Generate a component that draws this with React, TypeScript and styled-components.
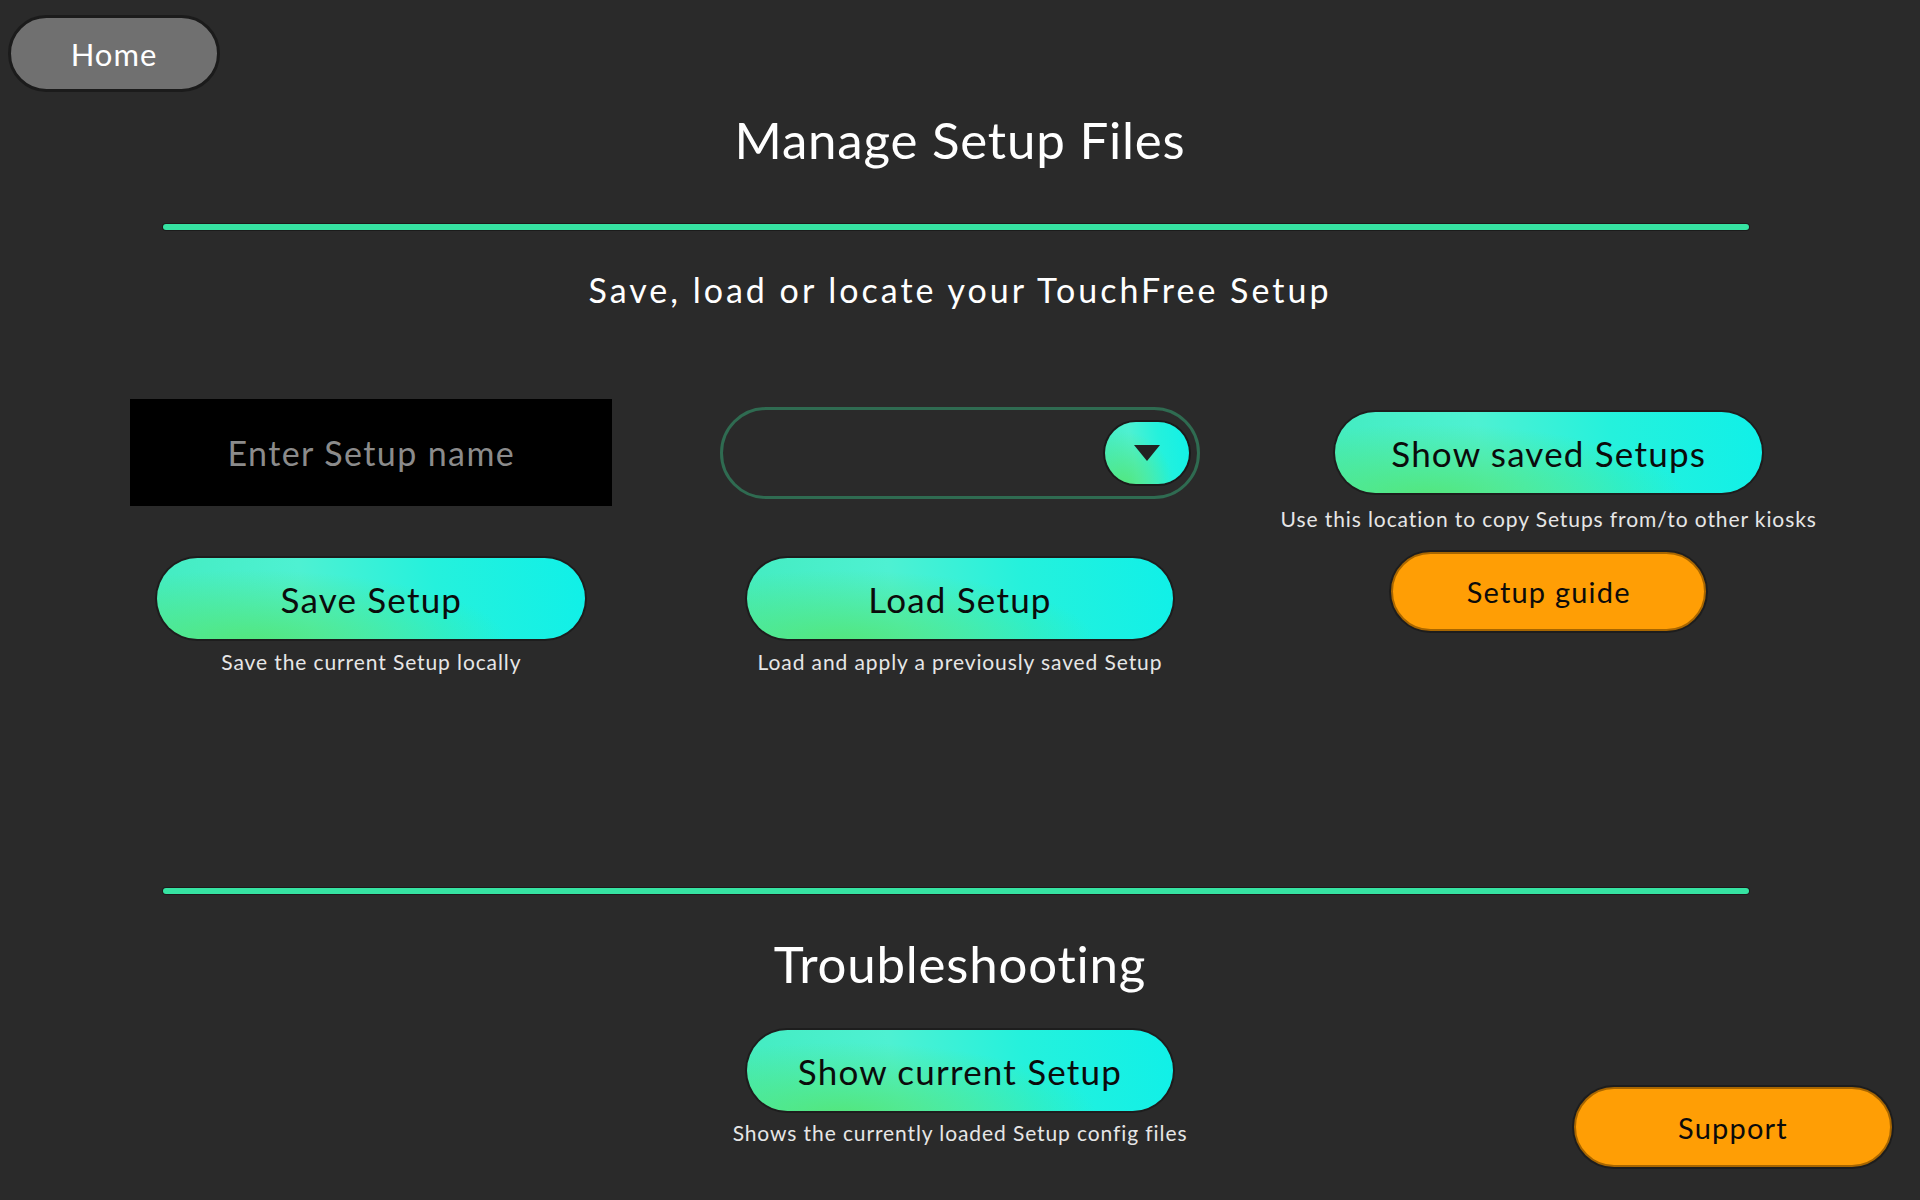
import * as React from 'react';
import styled, {createGlobalStyle} from 'styled-components';

const GlobalStyle = createGlobalStyle`
    html, body {
        margin: 0;
        padding: 0;
        background: #2a2a2a;
    }

    body {
        font-family: Lato, 'Open Sans', sans-serif;
        color: #ffffff;
    }
`;

const GRADIENT =
    'radial-gradient(ellipse 60% 90% at 22% 105%, rgba(84, 230, 120, 0.95), rgba(84, 230, 120, 0) 100%), ' +
    'linear-gradient(80deg, #43ecc0 0%, #4ef1d2 35%, #25f1dc 65%, #10f0e8 100%)';

const Page = styled.div`
    width: 1920px;
    height: 1200px;
    display: flex;
    flex-direction: column;
    overflow: hidden;
`;

const TopBar = styled.div`
    display: flex;
    padding: 15px 0 0 8px;
`;

const HomeButton = styled.button`
    width: 212px;
    height: 77px;
    box-sizing: border-box;
    border-radius: 40px;
    background: #707070;
    border: 3px solid #1b1b1b;
    color: #ffffff;
    font-family: Lato, sans-serif;
    font-size: 31px;
    letter-spacing: 1px;
    cursor: pointer;
`;

const Heading = styled.h1<{$top: number}>`
    margin: ${(p) => p.$top}px 0 0;
    font-size: 51px;
    line-height: 62px;
    font-weight: 400;
    text-align: center;
    letter-spacing: 0.8px;
    color: #ffffff;
`;

const Divider = styled.div<{$top: number}>`
    margin: ${(p) => p.$top}px 0 0 163px;
    width: 1586px;
    height: 6px;
    border-radius: 3px;
    background: #36e3a2;
    box-shadow: 0 0 0 1px rgba(0, 0, 0, 0.35);
`;

const SubHeading = styled.h2`
    margin: 40px 0 0;
    font-size: 34px;
    line-height: 40px;
    font-weight: 400;
    text-align: center;
    letter-spacing: 3px;
    color: #ffffff;
`;

const Columns = styled.div`
    display: grid;
    grid-template-columns: repeat(3, 1fr);
    padding: 0 77px;
    margin-top: 89px;
`;

const Column = styled.div`
    display: flex;
    flex-direction: column;
    align-items: center;
`;

const Slot = styled.div`
    height: 107px;
    display: flex;
    align-items: center;
    justify-content: center;
`;

const NameInput = styled.input`
    width: 482px;
    height: 107px;
    box-sizing: border-box;
    border: none;
    outline: none;
    background: #000000;
    color: #ffffff;
    font-family: Lato, sans-serif;
    font-size: 34px;
    letter-spacing: 1.4px;
    text-align: center;

    &::placeholder {
        color: #8b8b8b;
    }
`;

const Dropdown = styled.div`
    width: 480px;
    height: 92px;
    box-sizing: border-box;
    border: 3px solid #2f6b51;
    border-radius: 46px;
    display: flex;
    align-items: center;
    justify-content: flex-end;
    padding-right: 8px;
`;

const DropButton = styled.div`
    width: 84px;
    height: 62px;
    border-radius: 31px;
    background: ${GRADIENT};
    box-shadow: 0 0 0 2px #1a1a1a;
    display: flex;
    align-items: center;
    justify-content: center;
`;

const PillButton = styled.button<{$w: number; $size: number; $orange?: boolean}>`
    width: ${(p) => p.$w}px;
    height: 81px;
    border-radius: 41px;
    border: ${(p) => (p.$orange ? '2px solid #a86600' : 'none')};
    box-sizing: border-box;
    background: ${(p) => (p.$orange ? '#ff9e05' : GRADIENT)};
    box-shadow: 0 0 0 2px #1d1d1d;
    color: #0b0b0b;
    font-family: Lato, sans-serif;
    font-size: ${(p) => p.$size}px;
    letter-spacing: 1.2px;
    cursor: pointer;
`;

const Caption = styled.div<{$top: number}>`
    margin-top: ${(p) => p.$top}px;
    font-size: 21px;
    line-height: 26px;
    letter-spacing: 0.9px;
    color: #e6e6e6;
    white-space: nowrap;
`;

const BottomRow = styled.div`
    display: grid;
    grid-template-columns: 1fr 426px 1fr;
    margin-top: 35px;
`;

const SupportCell = styled.div`
    display: flex;
    justify-content: flex-end;
    align-items: flex-start;
    padding: 57px 28px 0 0;
`;

function Caret() {
    return (
        <svg width="26" height="16" viewBox="0 0 26 16">
            <path d="M0 0 H26 L13 16 Z" fill="#222222" />
        </svg>
    );
}

export default function App() {
    return (
        <Page>
            <GlobalStyle />
            <TopBar>
                <HomeButton>Home</HomeButton>
            </TopBar>
            <Heading $top={17}>Manage Setup Files</Heading>
            <Divider $top={53} />
            <SubHeading>Save, load or locate your TouchFree Setup</SubHeading>
            <Columns>
                <Column>
                    <Slot>
                        <NameInput placeholder={'Enter Setup name'} />
                    </Slot>
                    <PillButton $w={428} $size={35} style={{marginTop: 52}}>
                        Save Setup
                    </PillButton>
                    <Caption $top={10}>Save the current Setup locally</Caption>
                </Column>
                <Column>
                    <Slot>
                        <Dropdown>
                            <DropButton>
                                <Caret />
                            </DropButton>
                        </Dropdown>
                    </Slot>
                    <PillButton $w={426} $size={35} style={{marginTop: 52}}>
                        Load Setup
                    </PillButton>
                    <Caption $top={10}>Load and apply a previously saved Setup</Caption>
                </Column>
                <Column>
                    <Slot>
                        <PillButton $w={427} $size={35}>
                            Show saved Setups
                        </PillButton>
                    </Slot>
                    <Caption $top={0}>Use this location to copy Setups from/to other kiosks</Caption>
                    <PillButton $w={315} $size={29} $orange style={{marginTop: 20, height: 79}}>
                        Setup guide
                    </PillButton>
                </Column>
            </Columns>
            <Divider $top={213} />
            <Heading $top={39}>Troubleshooting</Heading>
            <BottomRow>
                <div />
                <Column>
                    <PillButton $w={426} $size={35}>
                        Show current Setup
                    </PillButton>
                    <Caption $top={9}>Shows the currently loaded Setup config files</Caption>
                </Column>
                <SupportCell>
                    <PillButton $w={318} $size={29} $orange style={{height: 80}}>
                        Support
                    </PillButton>
                </SupportCell>
            </BottomRow>
        </Page>
    );
}
